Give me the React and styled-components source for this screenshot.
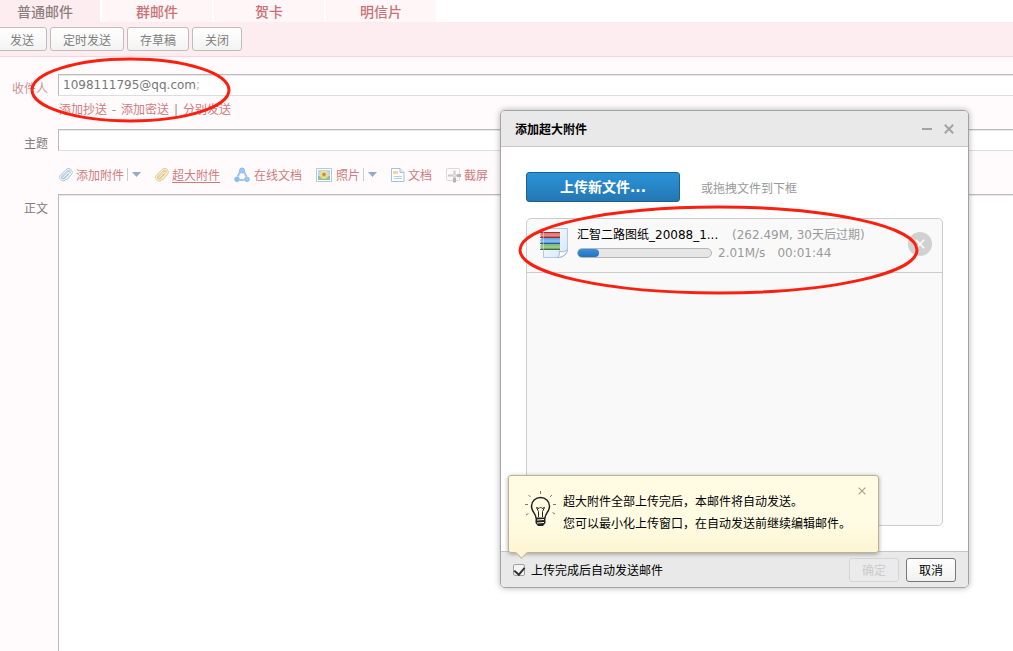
import { useState } from 'react';
import styled, { createGlobalStyle } from 'styled-components';

const tabs = ['普通邮件', '群邮件', '贺卡', '明信片'];
const actions = ['发送', '定时发送', '存草稿', '关闭'];

const ClipIcon = ({ light, dark }) => (
    <svg width='14' height='14' viewBox='0 0 14 14' fill='none' strokeLinecap='round' strokeLinejoin='round'>
        <path d='M4.200 9.600 8.800 5a1.200 1.200 0 0 1 1.700 1.700L6 11.200a2.500 2.500 0 0 1-3.700-3.600L7.400 2.500a2.700 2.700 0 0 1 4.300 3.400L7.500 10.700' stroke={dark} strokeWidth='2.400' />
        <path d='M4.200 9.600 8.800 5a1.200 1.200 0 0 1 1.700 1.700L6 11.200a2.500 2.500 0 0 1-3.700-3.600L7.400 2.500a2.700 2.700 0 0 1 4.300 3.400L7.500 10.700' stroke={light} strokeWidth='1.200' />
    </svg>
)

const ShareIcon = () => (
    <svg width='16' height='16' viewBox='0 0 16 16'>
        <path d='M6.300 4.500 3.700 9.500M9.700 4.500l2.800 5M5.400 13h5' stroke='#9cc6f4' strokeWidth='2' fill='none' />
        <circle cx='8' cy='3.500' r='2.500' fill='#9ccaf8' stroke='#8abaf0' />
        <circle cx='3' cy='12.300' r='2.300' fill='#8bbdf5' stroke='#8abaf0' />
        <circle cx='13' cy='12.300' r='2.300' fill='#9ccaf8' stroke='#8abaf0' />
    </svg>
)

const PhotoIcon = () => (
    <svg width='16' height='14' viewBox='0 0 16 14'>
        <rect x='.5' y='.5' width='15' height='13' fill='#fff' stroke='#b4cbe6' />
        <rect x='2' y='2' width='12' height='7' fill='#b5d8f2' />
        <rect x='2' y='8' width='12' height='4' fill='#90c3a0' />
        <circle cx='8' cy='6.500' r='4.300' fill='#f5e293' />
        <path d='M8 2v9M3.800 6.500h8.400M5 3.500l6 6M11 3.500l-6 6' stroke='#edd37c' strokeWidth='1.200' />
        <circle cx='8' cy='6.500' r='1.800' fill='#b8925c' />
    </svg>
)

const DocIcon = () => (
    <svg width='14' height='14' viewBox='0 0 14 14'>
        <path d='M.5.5h8.500l4 4v9H.5z' fill='#fff' stroke='#a4bfdf' />
        <path d='M9 .5v4h4' fill='#e2edf8' stroke='#a4bfdf' />
        <rect x='2' y='3' width='5' height='3' fill='#f8cfa6' />
        <path d='M2.500 8.500h8.500M2.500 10.500h8.500' stroke='#b5d2dc' />
    </svg>
)

const CropIcon = () => (
    <svg width='15' height='16' viewBox='0 0 15 16'>
        <rect x='.5' y='1.500' width='13' height='12' rx='1' fill='#fbf9fa' stroke='#dcd9da' />
        <path d='M8.500 3.500v11M2 8.500h12.500' stroke='#c9c7c8' strokeWidth='2' />
        <path d='M8.500 11v4.500M11 8.500h4' stroke='#b5b3b4' strokeWidth='3' />
        <path d='M8.500 7.500v2M7.500 8.500h2' stroke='#eee' />
    </svg>
)

const Caret = () => (
    <svg width='9' height='5' viewBox='0 0 9 5'>
        <path d='M0 0h9L4.500 5z' fill='#93a9cd' />
    </svg>
)

const Cross = ({ size, width }) => (
    <svg width={size} height={size} viewBox='0 0 10 10'>
        <path d='M.8.8l8.400 8.400M9.200.8.8 9.200' stroke='currentColor' strokeWidth={width} fill='none' />
    </svg>
)

const ArchiveIcon = () => (
    <svg width='28' height='31' viewBox='0 0 28 31'>
        <defs>
            <linearGradient id='paper' x1='0' y1='0' x2='1' y2='1'>
                <stop offset='0' stopColor='#fff' />
                <stop offset='1' stopColor='#d3e5f8' />
            </linearGradient>
            <linearGradient id='red' x1='0' y1='0' x2='0' y2='1'>
                <stop offset='0' stopColor='#d85f5f' />
                <stop offset='.6' stopColor='#ea8f8c' />
                <stop offset='1' stopColor='#b03a3a' />
            </linearGradient>
            <linearGradient id='blue' x1='0' y1='0' x2='0' y2='1'>
                <stop offset='0' stopColor='#5b9fe6' />
                <stop offset='.6' stopColor='#8cc5f7' />
                <stop offset='1' stopColor='#3a78c0' />
            </linearGradient>
            <linearGradient id='green' x1='0' y1='0' x2='0' y2='1'>
                <stop offset='0' stopColor='#7fb56c' />
                <stop offset='.6' stopColor='#a3cd92' />
                <stop offset='1' stopColor='#4f8544' />
            </linearGradient>
        </defs>
        <path d='M3.500.5h24v21c0 4-4 8-9 8h-15z' fill='url(#paper)' stroke='#b4c8df' />
        <path d='M17.500 29.500c2-2 2.500-4 1.500-6.500 3 1.500 6 1 8.500-1.500-1 5-5 8-10 8z' fill='#fff' stroke='#9db8d8' />
        <path d='M2 4h18v5.500H2a3 3 0 0 1 0-5.500z' fill='url(#red)' />
        <path d='M2 10h18v5.500H2a3 3 0 0 1 0-5.500z' fill='url(#blue)' />
        <path d='M2 16h18v5.500H2a3 3 0 0 1 0-5.500z' fill='url(#green)' />
        <path d='M0 4.500h20M0 9.500h20' stroke='#9c2f30' />
        <path d='M0 15.500h20' stroke='#2a5f9e' />
        <path d='M0 21.500h20' stroke='#3c6c34' />
        <path d='M3.500 4v18' stroke='#fff' strokeOpacity='.4' />
    </svg>
)

const BulbIcon = () => (
    <svg width='32' height='36' viewBox='0 0 32 36' fill='none'>
        <path d='M15.500 0v3M3.500 4l2 2M27 4l-2 2M0 13.500h3M28 13.500h3M1 24l2.500-1.500M30 23l-2.500-1.500' stroke='#777' />
        <path d='M11 27c0-4.500-4.500-6-4.500-12a9 8.500 0 0 1 18 0c0 6-4.500 7.500-4.500 12' stroke='#222' strokeWidth='1.500' />
        <path d='M13.500 26v-5.500l-2-4 2.500 1 1.500-1.500 1.500 1.500 2.500-1-2 4V26' stroke='#222' />
        <path d='M10.500 26.500h10v5.500l-2.500 3h-5l-2.500-3z' fill='#222' />
        <path d='M12 29l7-.5M12 32l7-.5' stroke='#fffce0' />
    </svg>
)

const Ring = ({ width, height }) => (
    <svg width={width} height={height} fill='none'>
        <ellipse cx={width / 2} cy={height / 2} rx={width / 2 - 2} ry={height / 2 - 2} stroke='#fb1f10' strokeWidth='3' />
    </svg>
)

const Attach = ({ icon, text, underline, menu, wide }) => (
    <AttachItem $wide={wide}>
        {icon}
        <PinkLink href='#' $underline={underline}>{text}</PinkLink>
        {menu && <CaretButton aria-label={text + '菜单'}><Caret /></CaretButton>}
    </AttachItem>
)

const UploadDialog = () => {
    const [autoSend, setAutoSend] = useState(true);
    const progress = 16;
    return (
        <Dialog role='dialog' aria-label='添加超大附件'>
            <DialogHeader>
                <h2>添加超大附件</h2>
                <IconButton aria-label='最小化'>
                    <svg width='10' height='10'><path d='M0 5h10' stroke='currentColor' strokeWidth='2' /></svg>
                </IconButton>
                <IconButton aria-label='关闭'><Cross size={10} width={2} /></IconButton>
            </DialogHeader>
            <DialogBody>
                <UploadRow>
                    <UploadButton>上传新文件...</UploadButton>
                    <span>或拖拽文件到下框</span>
                </UploadRow>
                <FileList>
                    <FileItem>
                        <ArchiveIcon />
                        <FileInfo>
                            <p><FileName>汇智二路图纸_20088_1...</FileName>(262.49M, 30天后过期)</p>
                            <p>
                                <Progress><ProgressFill style={{ width: `${progress}%` }} /></Progress>
                                <span>2.01M/s</span>
                                <span>00:01:44</span>
                            </p>
                        </FileInfo>
                        <RemoveButton aria-label='删除'><Cross size={10} width={1.5} /></RemoveButton>
                    </FileItem>
                </FileList>
            </DialogBody>
            <DialogFooter>
                <CheckLabel>
                    <input type='checkbox' checked={autoSend} onChange={(e) => setAutoSend(e.target.checked)} />
                    上传完成后自动发送邮件
                </CheckLabel>
                <FooterButton disabled>确定</FooterButton>
                <FooterButton>取消</FooterButton>
            </DialogFooter>
            <Tip>
                <BulbIcon />
                <p>超大附件全部上传完后，本邮件将自动发送。<br />您可以最小化上传窗口，在自动发送前继续编辑邮件。</p>
                <TipClose aria-label='关闭提示'><Cross size={8} width={1.5} /></TipClose>
            </Tip>
            <FileRing><Ring width={401} height={90} /></FileRing>
        </Dialog>
    )
}

const App = () => {
    return (
        <Page>
            <GlobalStyle />
            <Tabs>
                {tabs.map((tab, i) => (
                    <Tab href='#' key={tab} $active={i === 0}>{tab}</Tab>
                ))}
            </Tabs>
            <Toolbar>
                {actions.map((action) => <ToolButton key={action}>{action}</ToolButton>)}
            </Toolbar>
            <Form>
                <Label htmlFor='to' $pink>收件人</Label>
                <Recipients>
                    <span>1098111795@qq.com<i>;</i></span>
                    <input id='to' />
                </Recipients>
                <CopyRow>
                    <PinkLink href='#'>添加抄送</PinkLink>
                    <b>-</b>
                    <PinkLink href='#'>添加密送</PinkLink>
                    <b>|</b>
                    <PinkLink href='#'>分别发送</PinkLink>
                </CopyRow>
                <Label htmlFor='subject'>主题</Label>
                <Subject id='subject' />
                <AttachRow>
                    <Attach icon={<ClipIcon light='#eef6fd' dark='#a0bad3' />} text='添加附件' menu />
                    <Attach icon={<ClipIcon light='#fdf3d4' dark='#dcb980' />} text='超大附件' underline />
                    <Attach icon={<ShareIcon />} text='在线文档' wide />
                    <Attach icon={<PhotoIcon />} text='照片' menu wide />
                    <Attach icon={<DocIcon />} text='文档' />
                    <Attach icon={<CropIcon />} text='截屏' />
                </AttachRow>
                <Label htmlFor='content'>正文</Label>
                <Content id='content' />
            </Form>
            <AddressRing><Ring width={201} height={66} /></AddressRing>
            <UploadDialog />
        </Page>
    );
}

export default App;

const GlobalStyle = createGlobalStyle`
    * {
        box-sizing: border-box;
    }

    body {
        margin: 0;
    }

    body, button, input, textarea {
        font-family: "DejaVu Sans", "Noto Sans CJK SC", sans-serif;
        font-size: 12px;
    }

    h2, p {
        margin: 0;
        font-size: 12px;
    }

    button {
        padding: 0;
        cursor: pointer;
    }

    svg {
        display: block;
        flex: none;
    }
`

const Page = styled.div`
    position: relative;
    display: flex;
    flex-direction: column;
    min-height: 100vh;
    overflow: hidden;
    background: #fffafb;
`

const Tabs = styled.nav`
    display: flex;
    gap: 2px;
    height: 22px;
    margin-left: -10px;
    background: #fff;
`

const Tab = styled.a`
    width: 110px;
    line-height: 24px;
    text-align: center;
    text-decoration: none;
    font-size: 14px;
    font-weight: 500;
    color: ${(props) => (props.$active ? '#8c7f80' : '#c97277')};
    background: ${(props) => (props.$active ? '#feedf0' : '#fff6f7')};
`

const Toolbar = styled.div`
    display: flex;
    align-items: center;
    gap: 3px;
    height: 35px;
    margin-left: -3px;
    background: #feedf0;
    border-bottom: 1px solid #fbd3dc;
`

const ToolButton = styled.button`
    height: 24px;
    padding: 0 12px;
    border: 1px solid #bdbdbd;
    border-radius: 3px;
    background: linear-gradient(#fff, #f3f3f3);
    color: #808080;
`

const Form = styled.div`
    flex: 1;
    display: grid;
    grid-template-columns: 48px 1fr;
    grid-template-rows: 22px 33px 22px 43px 1fr;
    column-gap: 10px;
    padding-top: 17px;
`

const Label = styled.label`
    padding-top: 5px;
    line-height: 20px;
    text-align: right;
    white-space: nowrap;
    color: ${(props) => (props.$pink ? '#cb9295' : '#837b7d')};
`

const field = `
    border: 1px solid #bbb;
    border-bottom-color: #ddd;
    border-right: 0;
    border-radius: 0;
    background: #fff;
    box-shadow: inset 0 1px 0 #e8e8e8;
    outline: none;
`

const Recipients = styled.div`
    ${field}
    display: flex;
    align-items: center;
    padding-left: 4px;
    color: #777;

    i {
        font-style: normal;
        color: #bbb;
    }

    input {
        flex: 1;
        border: 0;
        background: none;
        outline: none;
    }
`

const CopyRow = styled.div`
    grid-column: 2;
    display: flex;
    padding: 4px 0 0 1px;
    line-height: 20px;

    b {
        width: 14px;
        text-align: center;
        font-weight: normal;
        color: #a58d90;
    }
`

const PinkLink = styled.a`
    color: #ce7c80;
    text-decoration: ${(props) => (props.$underline ? 'underline' : 'none')};
    text-underline-offset: 2px;
`

const Subject = styled.input`
    ${field}
    padding: 0 4px;
`

const AttachRow = styled.div`
    grid-column: 2;
    display: flex;
    align-items: center;
    gap: 14px;
    padding: 4px 0 0 1px;
    white-space: nowrap;
`

const AttachItem = styled.div`
    display: flex;
    align-items: center;

    & > a {
        margin-left: ${(props) => (props.$wide ? 4 : 3)}px;
    }
`

const CaretButton = styled.button`
    height: 13px;
    margin-left: 3px;
    padding-left: 4px;
    border: 0;
    border-left: 1px solid #ccc;
    background: none;
`

const Content = styled.textarea`
    ${field}
    border-bottom: 0;
    padding: 6px;
    resize: none;
`

const AddressRing = styled.div`
    position: absolute;
    left: 30px;
    top: 57px;
    pointer-events: none;
`

const FileRing = styled.div`
    position: absolute;
    left: 17px;
    top: 94px;
    pointer-events: none;
`

const Dialog = styled.section`
    position: absolute;
    top: 110px;
    right: 44px;
    width: 469px;
    border: 1px solid #a3a3a3;
    border-radius: 5px;
    background: #fff;
    box-shadow: 0 0 6px rgba(0, 0, 0, 0.3);
`

const DialogHeader = styled.header`
    display: flex;
    align-items: center;
    gap: 12px;
    height: 36px;
    padding: 0 14px;
    border-bottom: 1px solid #c8c8c8;
    border-radius: 4px 4px 0 0;
    background: #e9e9e9;

    h2 {
        flex: 1;
        font-weight: bold;
    }
`

const IconButton = styled.button`
    border: 0;
    background: none;
    color: #a3a3a3;
`

const DialogBody = styled.div`
    padding: 25px;
`

const UploadRow = styled.div`
    display: flex;
    align-items: center;
    gap: 21px;
    margin-bottom: 16px;
    color: #999;
`

const UploadButton = styled.button`
    width: 154px;
    height: 30px;
    padding-bottom: 2px;
    border: 1px solid #1d5f8f;
    border-radius: 3px;
    background: linear-gradient(#2b93d8, #2477b3);
    color: #fff;
    font-size: 14px;
    font-weight: bold;
`

const FileList = styled.div`
    height: 308px;
    border: 1px solid #ccc;
    border-radius: 5px;
    background: #f9f9f9;
`

const FileItem = styled.div`
    display: flex;
    align-items: center;
    height: 54px;
    padding: 0 10px 4px 13px;
    border-bottom: 1px solid #ccc;
`

const FileInfo = styled.div`
    flex: 1;
    margin-left: 9px;
    line-height: 18px;
    white-space: nowrap;
    color: #999;

    p {
        display: flex;
        align-items: center;
    }

    span + span {
        margin-left: 12px;
    }
`

const FileName = styled.span`
    width: 155px;
    color: #000;
`

const Progress = styled.div`
    width: 135px;
    height: 10px;
    margin-right: 6px;
    border: 1px solid #b5b5b5;
    border-radius: 5px;
    background: #e6e6e6;
`

const ProgressFill = styled.div`
    height: 8px;
    border-radius: 4px;
    background: linear-gradient(#3a8fdc, #2470c2);
`

const RemoveButton = styled.button`
    display: flex;
    align-items: center;
    justify-content: center;
    width: 24px;
    height: 24px;
    border: 0;
    border-radius: 50%;
    background: #d0d2d1;
    color: #fff;
`

const DialogFooter = styled.footer`
    display: flex;
    align-items: center;
    gap: 7px;
    height: 36px;
    padding: 0 12px;
    border-top: 1px solid #c8c8c8;
    border-radius: 0 0 4px 4px;
    background: #e9e9e9;
`

const CheckLabel = styled.label`
    flex: 1;
    display: flex;
    align-items: center;
    gap: 6px;

    input {
        appearance: none;
        width: 12px;
        height: 12px;
        margin: 0;
        border: 1px solid #a0a0a0;
        border-radius: 2px;
        background: #f4f4f4;
    }

    input:checked::before {
        content: '';
        display: block;
        width: 5px;
        height: 8px;
        margin: 0 auto;
        border: solid #333;
        border-width: 0 2px 2px 0;
        transform: rotate(40deg);
    }
`

const FooterButton = styled.button`
    width: 50px;
    height: 24px;
    border: 1px solid #777;
    border-radius: 3px;
    background: linear-gradient(#fff, #f1f1f1);
    color: #000;

    &:disabled {
        border-color: #d5d5d5;
        background: #ebebeb;
        color: #ccc;
    }
`

const Tip = styled.div`
    position: absolute;
    left: 7px;
    bottom: 34px;
    display: flex;
    width: 371px;
    height: 78px;
    padding: 15px 16px;
    border: 1px solid #bdb292;
    border-radius: 3px;
    background: linear-gradient(#fffce3 60%, #fdf5d3);
    box-shadow: 0 1px 4px rgba(0, 0, 0, 0.35);

    p {
        margin-left: 6px;
        line-height: 22px;
        white-space: nowrap;
    }

    &::after {
        content: '';
        position: absolute;
        left: 8px;
        bottom: -5px;
        width: 8px;
        height: 8px;
        border: solid #bdb292;
        border-width: 0 1px 1px 0;
        background: #fdf5d3;
        transform: rotate(45deg);
    }
`

const TipClose = styled.button`
    position: absolute;
    top: 11px;
    right: 12px;
    border: 0;
    background: none;
    color: #aaa48e;
`
